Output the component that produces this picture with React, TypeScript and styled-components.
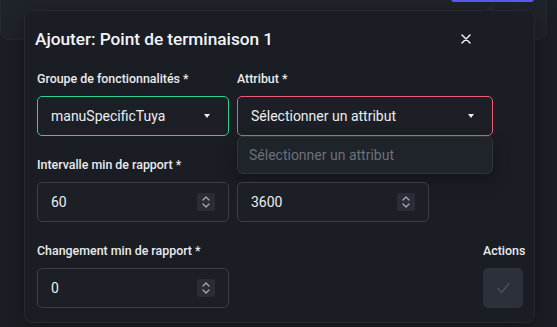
import * as React from 'react'
import styled, { createGlobalStyle } from 'styled-components'

const Global = createGlobalStyle`
  html, body {
    margin: 0;
    padding: 0;
    background: #1b1f25;
    font-family: Roboto, "Noto Sans", sans-serif;
    overflow: hidden;
  }
  * { box-sizing: border-box; }
`

const Page = styled.div`
  position: relative;
  width: 557px;
  height: 327px;
  overflow: hidden;
`

const TopCard = styled.div`
  margin-top: -30px;
  width: 547px;
  height: 70px;
  background: #1f232a;
  border: 1px solid #252930;
  border-radius: 0 0 8px 8px;
  display: flex;
  justify-content: flex-end;
  padding-right: 12px;
`

const PrimaryButton = styled.div`
  width: 83px;
  height: 31px;
  background: #5b5bf2;
  border-radius: 0 0 3px 3px;
`

const Modal = styled.div`
  position: absolute;
  top: 10px;
  left: 24px;
  width: 511px;
  height: 313px;
  background: #1a1d23;
  border: 1px solid #252a31;
  border-radius: 8px;
  box-shadow: 0 8px 24px rgba(0, 0, 0, 0.35);
  padding: 16px 11px 0 12px;
`

const Arrow = styled.div`
  position: absolute;
  top: -7px;
  left: 460px;
  width: 0;
  height: 0;
  border-left: 6px solid transparent;
  border-right: 6px solid transparent;
  border-bottom: 7px solid #22262d;
`

const Header = styled.div`
  display: flex;
  align-items: center;
  justify-content: space-between;
  margin-bottom: 19px;
`

const Title = styled.h2`
  margin: 0 0 0 -2px;
  font-size: 17.3px;
  line-height: 24px;
  font-weight: 500;
  letter-spacing: -0.05px;
  color: #f2f4f7;
`

const CloseButton = styled.button`
  display: flex;
  align-items: center;
  justify-content: center;
  width: 20px;
  height: 20px;
  margin-right: 47px;
  padding: 0;
  border: none;
  background: transparent;
  color: #eef0f3;
  cursor: pointer;
`

const Body = styled.div`
  display: flex;
  flex-direction: column;
  gap: 20px;
`

const Row = styled.div`
  display: flex;
  align-items: flex-start;
  justify-content: space-between;
`

const Field = styled.div<{ $width: number }>`
  position: relative;
  display: flex;
  flex-direction: column;
  width: ${p => p.$width}px;
`

const Label = styled.label<{ $center?: boolean }>`
  font-size: 12.4px;
  line-height: 18px;
  font-weight: 500;
  color: #e9ebee;
  margin-bottom: 8px;
  white-space: nowrap;
  text-align: ${p => (p.$center ? 'center' : 'left')};
`

const Pair = styled.div`
  display: flex;
  gap: 8px;
`

const Control = styled.div<{ $width: number; $border?: string }>`
  display: flex;
  align-items: center;
  justify-content: space-between;
  width: ${p => p.$width}px;
  height: 40px;
  padding: 0 13px 0 13px;
  background: #1c1f26;
  border: 1px solid ${p => p.$border || '#3a3f47'};
  border-radius: 5px;
  font-size: 14px;
  color: #eceef1;
`

const Caret = styled.span`
  width: 0;
  height: 0;
  margin-right: 5px;
  border-left: 3.5px solid transparent;
  border-right: 3.5px solid transparent;
  border-top: 4px solid #eceef1;
`

const Spinner = styled.span`
  display: flex;
  align-items: center;
  justify-content: center;
  width: 18px;
  height: 18px;
  background: #2a2d35;
  border-radius: 2px;
`

const Menu = styled.div`
  position: absolute;
  top: 66px;
  left: 0;
  width: 256px;
  height: 38px;
  display: flex;
  align-items: center;
  padding-left: 11px;
  background: #1f232a;
  border: 1px solid #30353d;
  border-radius: 6px;
  box-shadow: 0 6px 16px rgba(0, 0, 0, 0.3);
  font-size: 14px;
  color: #6c717a;
`

const ActionButton = styled.button`
  display: flex;
  align-items: center;
  justify-content: center;
  width: 40px;
  height: 40px;
  padding: 0;
  border: none;
  border-radius: 5px;
  background: #2c3038;
  color: #4c515a;
`

const SpinIcon = () => (
  <svg width="10" height="14" viewBox="0 0 10 14" fill="none" stroke="#a9adb5" strokeWidth="1.2" strokeLinecap="round" strokeLinejoin="round">
    <path d="M2 5 L5 2 L8 5" />
    <path d="M2 9 L5 12 L8 9" />
  </svg>
)

const NumberInput = ({ value }: { value: string }) => (
  <Control $width={192}>
    <span>{value}</span>
    <Spinner><SpinIcon /></Spinner>
  </Control>
)

export default function App() {
  return (
    <Page>
      <Global />
      <TopCard>
        <PrimaryButton />
      </TopCard>
      <Modal>
        <Arrow />
        <Header>
          <Title>Ajouter: Point de terminaison 1</Title>
          <CloseButton aria-label="Fermer">
            <svg width="10" height="10" viewBox="0 0 10 10" stroke="currentColor" strokeWidth="1.5" strokeLinecap="round">
              <path d="M1 1 L9 9 M9 1 L1 9" />
            </svg>
          </CloseButton>
        </Header>
        <Body>
          <Row>
            <Pair>
              <Field $width={192}>
                <Label>Groupe de fonctionnalités *</Label>
                <Control $width={192} $border="#2fcf8c">
                  <span>manuSpecificTuya</span>
                  <Caret />
                </Control>
              </Field>
              <Field $width={256}>
                <Label>Attribut *</Label>
                <Control $width={256} $border="#ec5b73">
                  <span>Sélectionner un attribut</span>
                  <Caret />
                </Control>
                <Menu>Sélectionner un attribut</Menu>
              </Field>
            </Pair>
          </Row>
          <Row>
            <Field $width={392}>
              <Label>Intervalle min de rapport *</Label>
              <Pair>
                <NumberInput value="60" />
                <NumberInput value="3600" />
              </Pair>
            </Field>
          </Row>
          <Row>
            <Field $width={192}>
              <Label>Changement min de rapport *</Label>
              <NumberInput value="0" />
            </Field>
            <Field $width={40}>
              <Label $center>Actions</Label>
              <ActionButton aria-label="Valider">
                <svg width="13" height="12" viewBox="0 0 13 12" fill="none" stroke="currentColor" strokeWidth="1.4" strokeLinecap="round" strokeLinejoin="round">
                  <path d="M1 6.5 L4.5 10.5 L12 1.5" />
                </svg>
              </ActionButton>
            </Field>
          </Row>
        </Body>
      </Modal>
    </Page>
  )
}
